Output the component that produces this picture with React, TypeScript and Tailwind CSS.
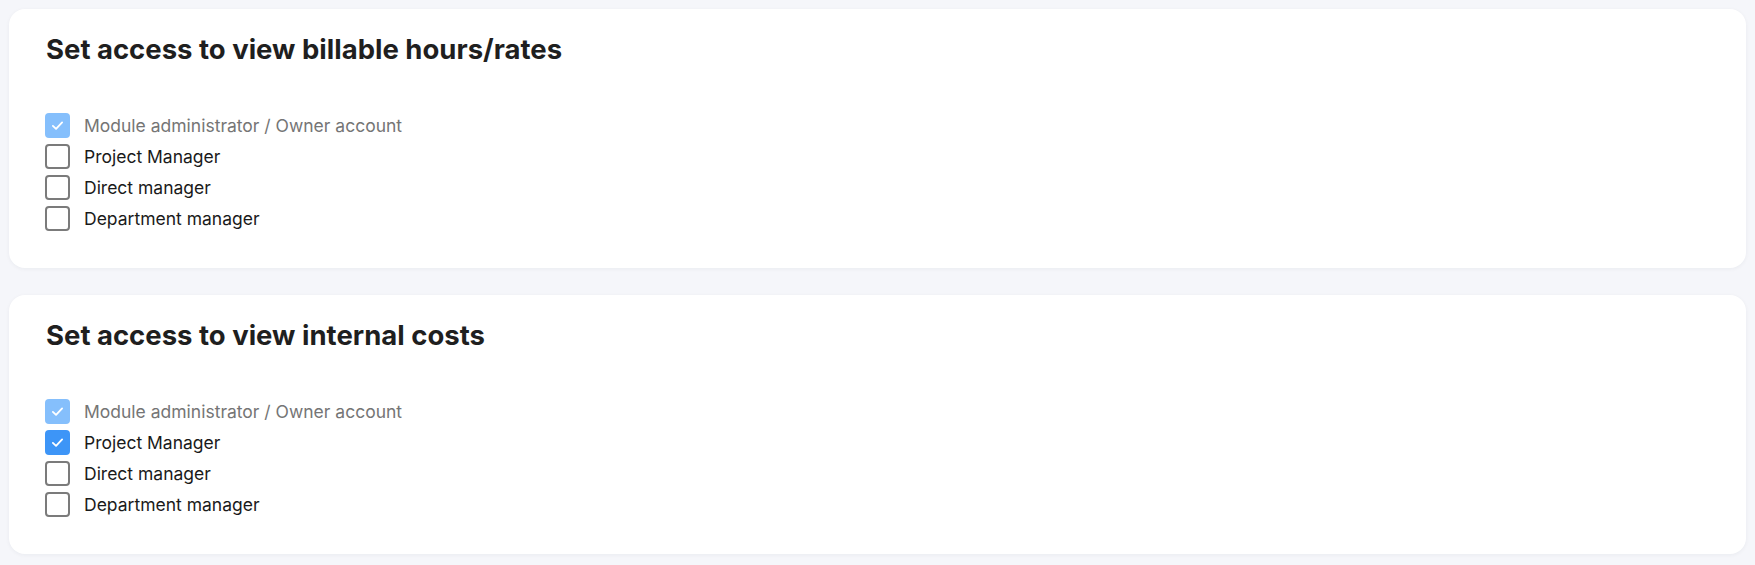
import React from "react";

type Item = { label: string; checked: boolean; disabled?: boolean };

function Check() {
  return (
    <svg width="17" height="17" viewBox="0 0 14 14" fill="none">
      <path d="M3.2 7.3 L5.8 9.8 L10.8 4.4" stroke="white" strokeWidth="1.5" strokeLinecap="round" strokeLinejoin="round" />
    </svg>
  );
}

function Row({ item }: { item: Item }) {
  let box = "w-[25px] h-[25px] rounded-[4px] flex items-center justify-center shrink-0 ";
  if (item.checked && item.disabled) box += "bg-[#85bffc]";
  else if (item.checked) box += "bg-[#3d95f7]";
  else box += "border-2 border-[#7b7b7b] bg-white";
  return (
    <div className="flex items-center gap-[14px] h-[25px]">
      <div className={box}>{item.checked && <Check />}</div>
      <span className={"text-[17.5px] leading-[25px] " + (item.disabled ? "text-[#757575]" : "text-[#1a1a1a]")}>
        {item.label}
      </span>
    </div>
  );
}

function Card({ title, items }: { title: string; items: Item[] }) {
  return (
    <div className="bg-white rounded-[16px] shadow-[0_1px_4px_rgba(20,30,60,0.05)] pl-[36px] pt-[24px] pb-[37px]">
      <h2 className="pl-[1px] text-[27.5px] leading-[32px] font-bold text-[#1f1f1f]">{title}</h2>
      <div className="mt-[48px] flex flex-col gap-[6px]">
        {items.map((it) => (
          <Row key={it.label} item={it} />
        ))}
      </div>
    </div>
  );
}

export default function App() {
  return (
    <div
      className="min-h-screen bg-[#f5f6fa] px-[9px] pt-[9px] pb-[12px] flex flex-col gap-[27px]"
      style={{ fontFamily: "Inter, 'Noto Sans', sans-serif" }}
    >
      <Card
        title="Set access to view billable hours/rates"
        items={[
          { label: "Module administrator / Owner account", checked: true, disabled: true },
          { label: "Project Manager", checked: false },
          { label: "Direct manager", checked: false },
          { label: "Department manager", checked: false },
        ]}
      />
      <Card
        title="Set access to view internal costs"
        items={[
          { label: "Module administrator / Owner account", checked: true, disabled: true },
          { label: "Project Manager", checked: true },
          { label: "Direct manager", checked: false },
          { label: "Department manager", checked: false },
        ]}
      />
    </div>
  );
}
